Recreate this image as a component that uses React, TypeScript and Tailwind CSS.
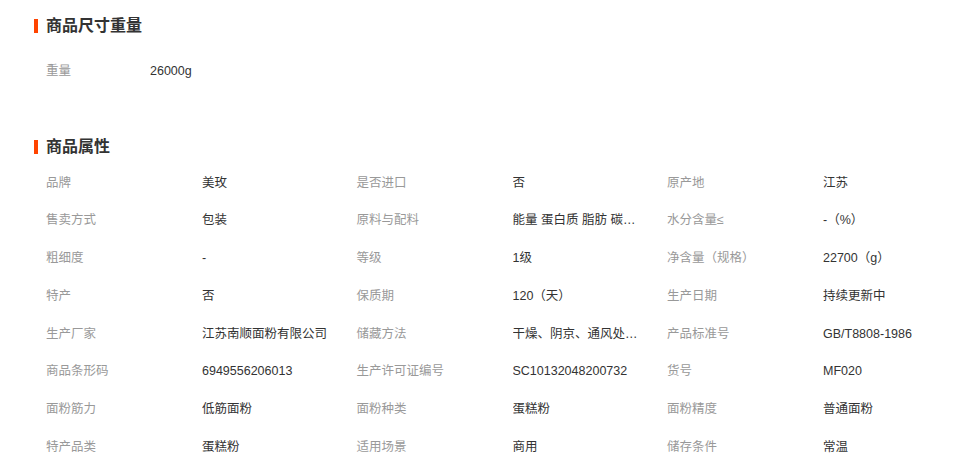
import React from "react";

const props: [string, string][] = [
  ["品牌", "美玫"],
  ["是否进口", "否"],
  ["原产地", "江苏"],
  ["售卖方式", "包装"],
  ["原料与配料", "能量 蛋白质 脂肪 碳水化合物 钠"],
  ["水分含量≤", "-（%）"],
  ["粗细度", "-"],
  ["等级", "1级"],
  ["净含量（规格）", "22700（g）"],
  ["特产", "否"],
  ["保质期", "120（天）"],
  ["生产日期", "持续更新中"],
  ["生产厂家", "江苏南顺面粉有限公司"],
  ["储藏方法", "干燥、阴京、通风处存放"],
  ["产品标准号", "GB/T8808-1986"],
  ["商品条形码", "6949556206013"],
  ["生产许可证编号", "SC10132048200732"],
  ["货号", "MF020"],
  ["面粉筋力", "低筋面粉"],
  ["面粉种类", "蛋糕粉"],
  ["面粉精度", "普通面粉"],
  ["特产品类", "蛋糕粉"],
  ["适用场景", "商用"],
  ["储存条件", "常温"],
];

function Heading({ title }: { title: string }) {
  return (
    <div className="flex items-center h-5">
      <span className="w-1 h-[14px] bg-[#ff4400]" />
      <h2 className="ml-2 text-[16px] font-bold text-[#333]">{title}</h2>
    </div>
  );
}

export default function App() {
  return (
    <div
      className="w-[963px] h-[474px] bg-white pl-[34px] pt-[16px] overflow-hidden text-[12.5px]"
      style={{ fontFamily: '"Liberation Sans", "Noto Sans CJK SC", sans-serif' }}
    >
      <Heading title="商品尺寸重量" />
      <div className="flex items-center h-[38px] mt-4 pl-3">
        <span className="w-[104px] text-[#999]">重量</span>
        <span className="text-[#333]">26000g</span>
      </div>

      <div className="mt-[47px]">
        <Heading title="商品属性" />
      </div>
      <div className="grid grid-cols-[310.5px_310.5px_310.5px] mt-[7px] pl-3">
        {props.map(([label, value]) => (
          <div key={label} className="flex items-center h-[37.75px]">
            <span className="w-[156px] shrink-0 text-[#999] whitespace-nowrap">{label}</span>
            <span className="w-[130px] text-[#333] truncate">{value}</span>
          </div>
        ))}
      </div>
    </div>
  );
}
